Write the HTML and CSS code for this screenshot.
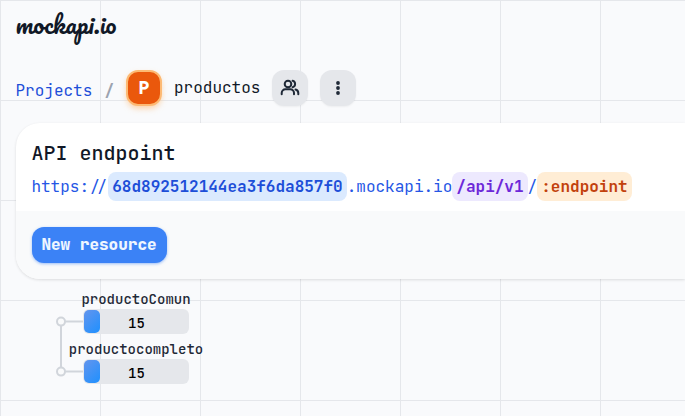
FILE: index.html
```html
<!DOCTYPE html>
<html lang="es">
<head>
<meta charset="utf-8">
<title>mockapi.io</title>
<link rel="stylesheet" href="styles.css">
</head>
<body>
<header class="brand"><span class="logo">mockapi.io</span></header>
<nav class="crumbs">
  <a class="projects">Projects</a>
  <span class="slash">/</span>
  <span class="badge">P</span>
  <span class="name">productos</span>
  <button class="icon-btn" aria-label="Collaborators">
    <svg width="20" height="20" viewBox="0 0 20 20" fill="none" stroke="currentColor" stroke-width="2" stroke-linecap="round" stroke-linejoin="round"><circle cx="8" cy="6" r="3.3"/><path d="M1.7 16.2V15a3.7 3.7 0 0 1 3.7-3.7h4.9A3.7 3.7 0 0 1 14 15v1.2"/><path d="M12.6 2.8a3.3 3.3 0 0 1 0 6.4"/><path d="M15.5 11.5a3.7 3.7 0 0 1 2.8 3.5v1.2"/></svg>
  </button>
  <button class="icon-btn" aria-label="More">
    <svg width="20" height="20" viewBox="0 0 20 20" fill="currentColor"><circle cx="10" cy="5" r="1.9"/><circle cx="10" cy="10" r="1.9"/><circle cx="10" cy="15" r="1.9"/></svg>
  </button>
</nav>
<section class="card">
  <div class="endpoint">
    <h1>API endpoint</h1>
    <div class="url"><span>https://</span><b class="pill blue">68d892512144ea3f6da857f0</b><span>.mockapi.io</span><b class="pill violet">/api/v1</b><span>/</span><b class="pill orange">:endpoint</b></div>
  </div>
  <div class="actions"><button class="new">New resource</button></div>
</section>
<main class="tree">
  <svg class="links" width="32" height="62" viewBox="0 0 32 62" fill="#f9fafb" stroke="#d1d5db" stroke-width="2"><path d="M5 6.6v50M5 6.6h26M5 56.6h26"/><circle cx="5" cy="6.6" r="4"/><circle cx="5" cy="56.6" r="4"/></svg>
  <div class="resources">
    <div class="resource"><span class="label">productoComun</span><div class="bar"><i></i><span>15</span></div></div>
    <div class="resource"><span class="label">productocompleto</span><div class="bar"><i></i><span>15</span></div></div>
  </div>
</main>
</body>
</html>
```
FILE: styles.css
```css
* { box-sizing: border-box; }
body {
  margin: 0;
  height: 416px;
  overflow: hidden;
  font: 16px/24px "JetBrains Mono", "DejaVu Sans Mono", monospace;
  color: #111827;
  background-color: #f9fafc;
  background-image: linear-gradient(to right, #e5e7eb 1px, transparent 1px), linear-gradient(#e5e7eb 1px, transparent 1px);
  background-size: 100px 100px;
}
button { border: 0; padding: 0; font: inherit; }
.brand { height: 70px; padding: 3px 0 0 15.5px; }
.logo { display: block; font: 24px/42px Pacifico, cursive; }
.crumbs { display: flex; align-items: center; height: 36px; padding-left: 15.5px; }
.projects { width: 77px; padding-top: 5px; color: #1d4ed8; }
.slash { width: 10px; margin: 5px 11.5px 0 12px; color: #9ca3af; font-weight: 600; }
.badge {
  width: 36px;
  height: 36px;
  border: 2px solid #fdba74;
  border-radius: 12px;
  background: #ea580c;
  color: #fff;
  font-weight: 800;
  font-size: 18px;
  line-height: 32px;
  text-align: center;
  box-shadow: 0 3px 6px -1px #fdba74b0;
}
.name { width: 98px; margin-left: 12px; }
.icon-btn {
  display: grid;
  place-items: center;
  width: 36px;
  height: 36px;
  border-radius: 12px;
  background: #e5e7eb;
  color: #1f2937;
  box-shadow: 0 1px 2px #0000000d;
}
.icon-btn + .icon-btn { margin-left: 12px; }
.card {
  height: 156px;
  margin: 17px 0 0 16px;
  border-radius: 24px 0 0 24px;
  overflow: hidden;
  background: #fff;
  box-shadow: 0 1px 3px #0000001f;
}
.endpoint { height: 88px; padding: 16px 16px 0 15.4px; }
h1 {
  margin: 0;
  font-size: 20px;
  line-height: 28px;
  font-weight: 500;
}
.url { display: flex; margin-top: 5px; line-height: 29px; color: #2556e5; white-space: pre; }
.pill { padding: 0 4.06px; border-radius: 8px; }
.blue { background: #dbeafe; color: #1d4ed8; }
.violet { background: #ede9fe; color: #6d28d9; }
.orange { background: #ffedd5; color: #c2410c; }
.actions { height: 68px; padding: 16px; background: #f9fafb; }
.new {
  width: 135px;
  height: 36px;
  padding-right: 1px;
  border-radius: 12px;
  background: #3b82f6;
  color: #eff6ff;
  font-weight: 800;
  box-shadow: 0 1px 3px #3b82f680;
}
.tree { display: flex; padding: 11px 0 0 56px; font-size: 14px; }
.links { margin-top: 25px; flex: none; }
.resources { width: 96px; margin-left: -4px; }
.resource { display: flex; flex-direction: column; align-items: center; width: 104px; height: 50px; }
.label { height: 19px; line-height: 18px; white-space: nowrap; color: #1f2937; font-weight: 500; }
.bar {
  display: flex;
  align-items: center;
  width: 106px;
  height: 25px;
  border-radius: 6px;
  background: #e5e7eb;
  color: #000;
}
.bar i {
  width: 16px;
  height: 23px;
  border-radius: 5px;
  margin: 0 28px 0 1px;
  background: linear-gradient(135deg, #6495ed, #1e90ff);
}
.bar span { padding-top: 3px; font-weight: 500; }
```
